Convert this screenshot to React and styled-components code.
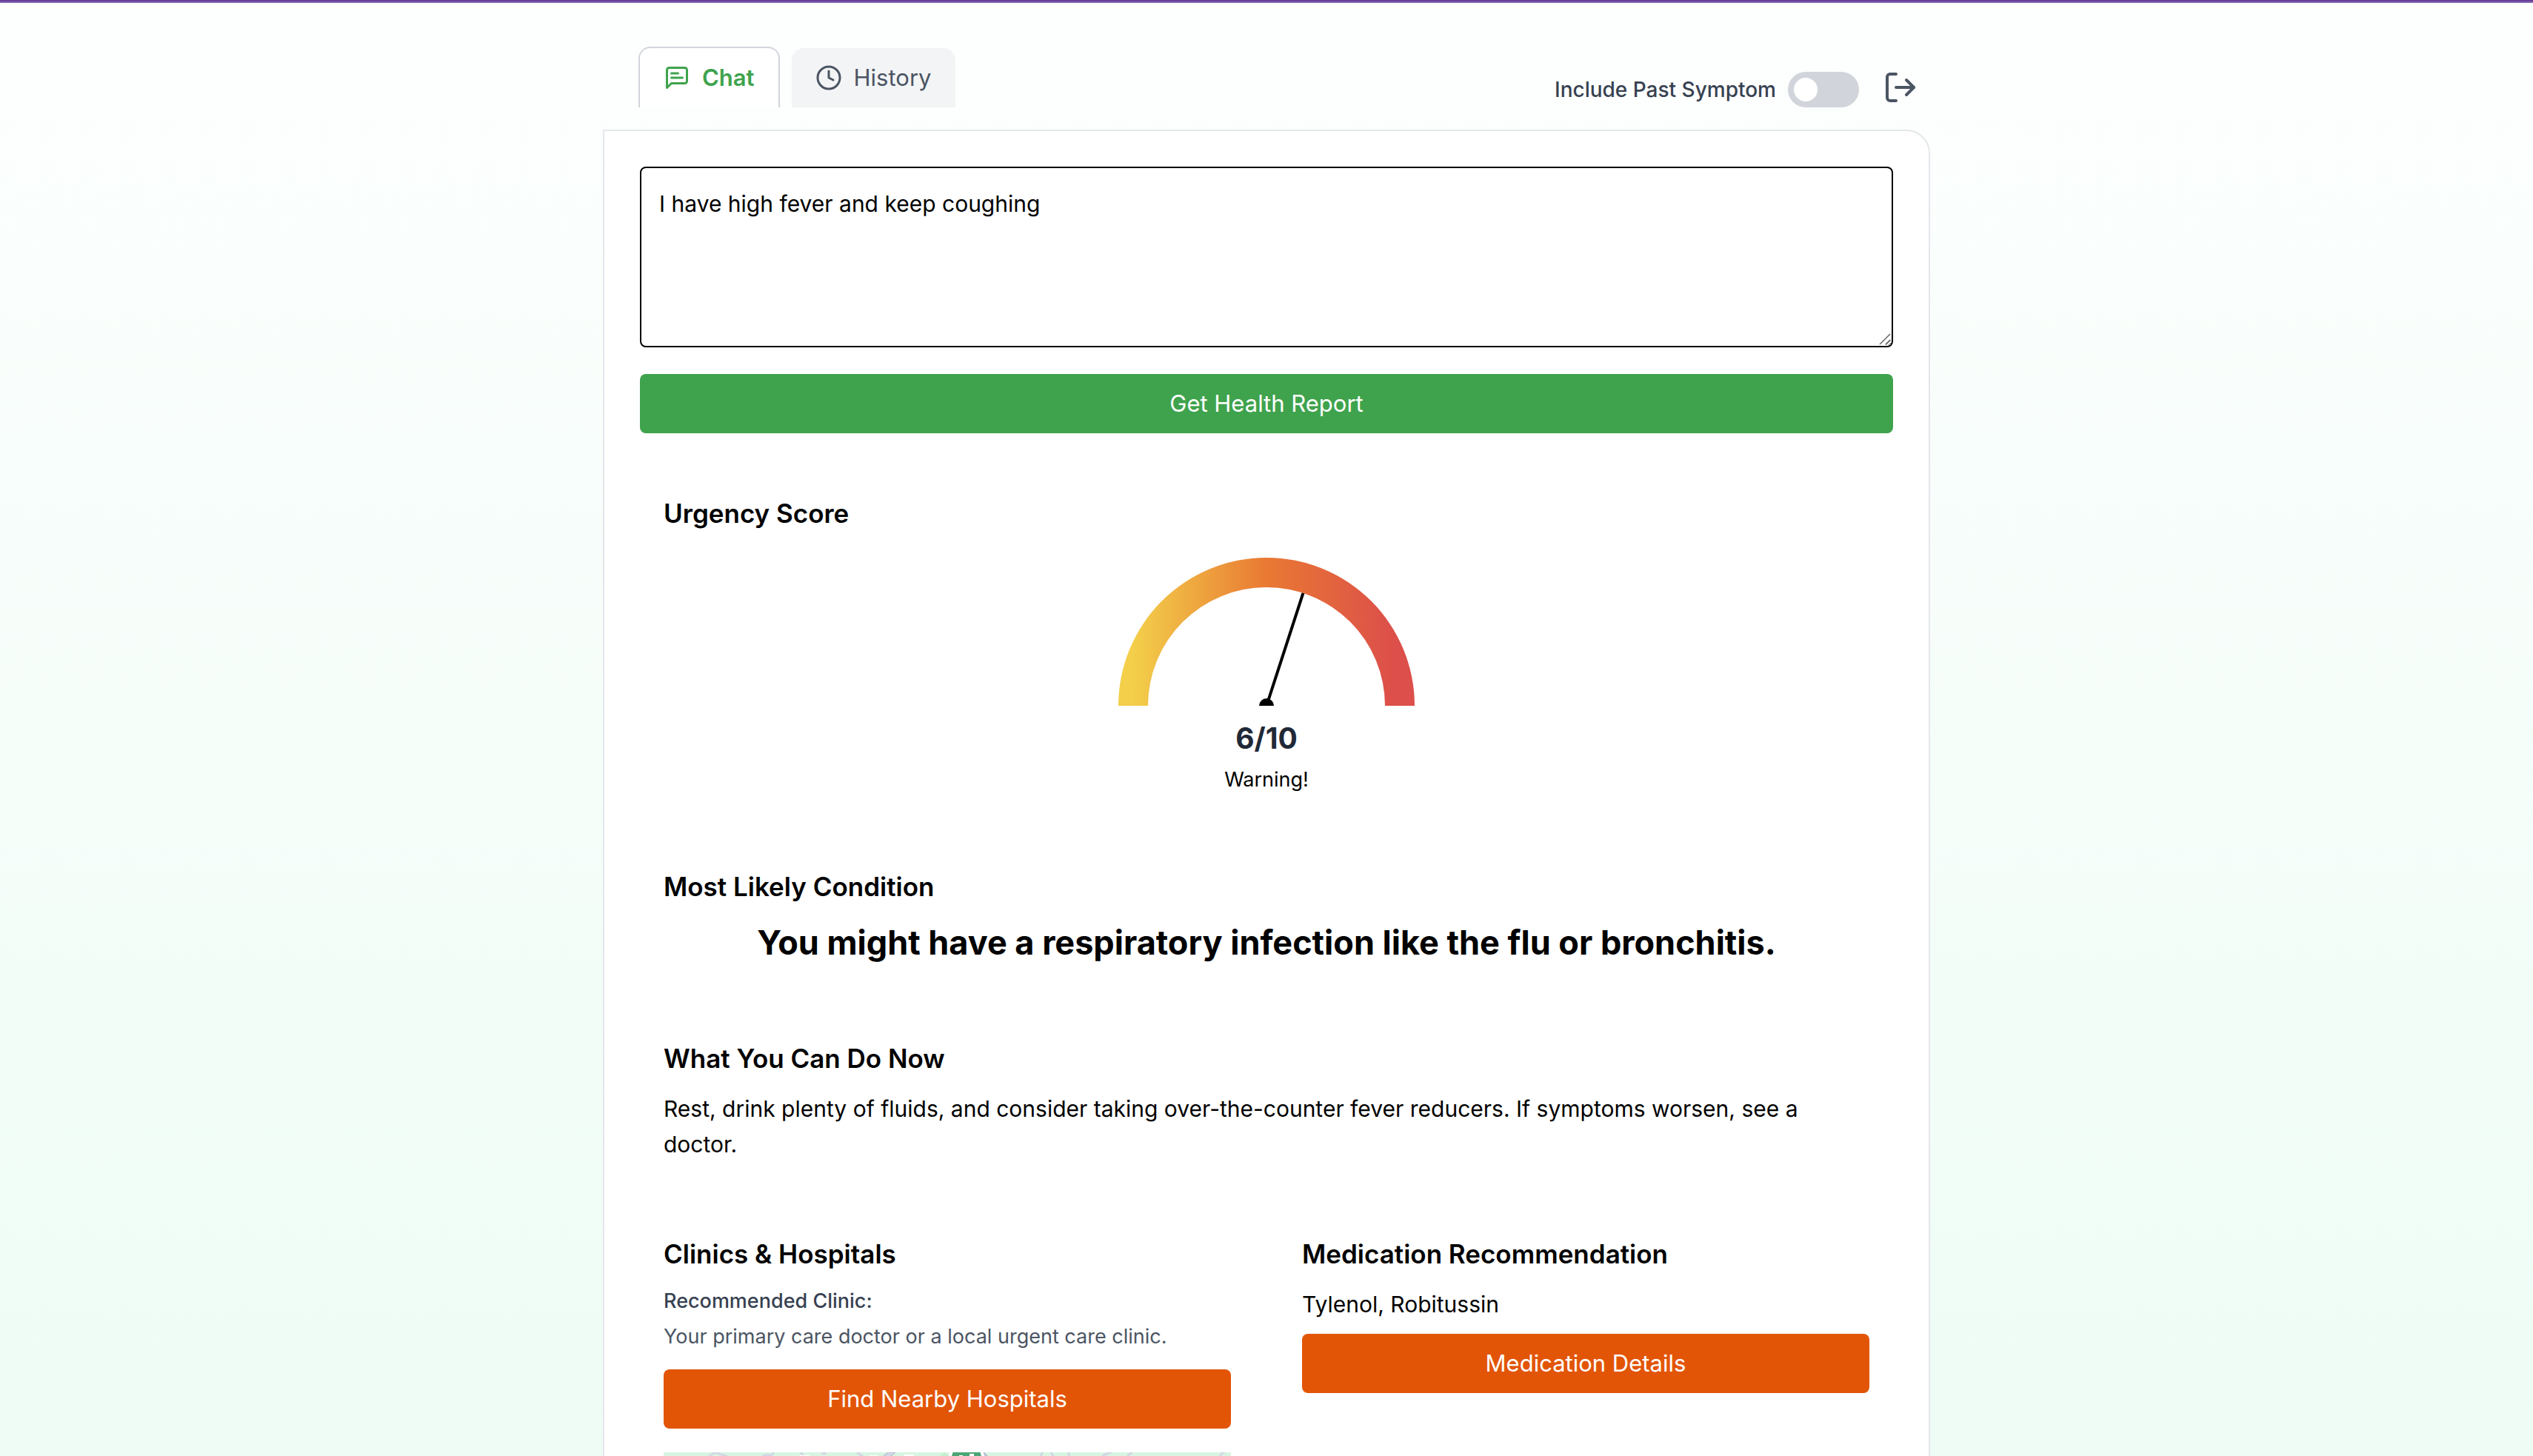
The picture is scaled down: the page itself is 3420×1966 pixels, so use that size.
import React, { useState } from "react";
import styled, { createGlobalStyle } from "styled-components";

const GlobalStyle = createGlobalStyle`
  *, *::before, *::after { box-sizing: border-box; }
  body { margin: 0; font-family: Inter, "Liberation Sans", sans-serif; color: #000; }
  h2, p { margin: 0; }
  button, textarea { font: inherit; }
`;

const Page = styled.div`
  height: 100vh;
  overflow-y: auto;
  scrollbar-width: none;
  background: linear-gradient(to bottom, #fdfffe, #eefcf5);
  font-size: 30px;
  line-height: 48px;
`;

const Accent = styled.div`
  height: 4px;
  border-bottom: 2px solid #8568b0;
  background: #653f99;
`;

const Shell = styled.main`
  max-width: 1792px;
  margin: 0 auto;
  padding-top: 59px;
`;

const Header = styled.header`
  display: flex;
  justify-content: space-between;
  align-items: flex-end;
  padding: 0 16px 0 48px;
  margin-bottom: 30px;
`;

const Tabs = styled.nav`
  display: flex;
  align-items: flex-end;
  gap: 16px;
`;

const Tab = styled.button`
  display: flex;
  align-items: center;
  gap: 16px;
  padding: 16px 32px;
  border: 2px solid #d1d5db;
  border-width: ${(p) => (p.$active ? "2px 2px 0" : "0")};
  border-radius: 16px 16px 0 0;
  background: ${(p) => (p.$active ? "#ffffff" : "#f3f4f6")};
  color: ${(p) => (p.$active ? "#3fa34d" : "#4b5563")};
  font-size: 31px;
  font-weight: ${(p) => (p.$active ? 600 : 400)};
  cursor: pointer;
`;

const Tools = styled.div`
  display: flex;
  align-items: flex-end;
  gap: 32px;
`;

const ToggleLabel = styled.label`
  display: flex;
  align-items: center;
  gap: 16px;
  color: #374151;
  font-size: 28px;
  font-weight: 500;
`;

const Toggle = styled.input`
  appearance: none;
  width: 96px;
  height: 48px;
  margin: 0;
  padding: 8px;
  border-radius: 24px;
  background: ${(p) => (p.checked ? "#3fa34d" : "#d1d5db")};
  cursor: pointer;

  &::before {
    content: "";
    display: block;
    width: 32px;
    height: 32px;
    margin-left: ${(p) => (p.checked ? "auto" : "0")};
    border-radius: 50%;
    background: #ffffff;
  }
`;

const IconButton = styled.button`
  display: flex;
  padding: 0;
  margin-bottom: 3px;
  border: 0;
  background: none;
  color: #4b5563;
  cursor: pointer;
`;

const Panel = styled.div`
  padding: 48px;
  border: 2px solid #e5e7eb;
  border-radius: 0 32px 32px 32px;
  background: #ffffff;
`;

const Form = styled.form`
  display: grid;
  gap: 36px;
  margin-bottom: 48px;
`;

const SymptomField = styled.div`
  position: relative;
  display: grid;
`;

const SymptomInput = styled.textarea`
  height: 244px;
  padding: 24px;
  border: 2px solid #000;
  border-radius: 8px;
  background: #ffffff;
  color: #000;
  resize: vertical;
  outline: none;
`;

const ResizeGrip = styled.svg`
  position: absolute;
  right: 2px;
  bottom: 2px;
  width: 20px;
  height: 20px;
  pointer-events: none;
`;

const ActionButton = styled.button`
  width: 100%;
  padding: 16px;
  border: 0;
  border-radius: 8px;
  background: ${(p) => (p.$tone === "orange" ? "#e25507" : "#3fa34d")};
  color: #ffffff;
  font-size: 31px;
  cursor: pointer;
`;

const Report = styled.div`
  display: grid;
  gap: 32px;
`;

const Columns = styled.div`
  display: grid;
  grid-template-columns: 1fr 1fr;
  gap: 32px;
`;

const Section = styled.section`
  padding: 32px;
`;

const Heading = styled.h2`
  margin-bottom: 16px;
  font-size: 35px;
  line-height: 56px;
  font-weight: 600;
`;

const Gauge = styled.div`
  display: flex;
  flex-direction: column;
  align-items: center;
  padding-top: 16px;
`;

const Score = styled.p`
  margin: 16px 0 8px;
  color: #1f2937;
  font-size: 39px;
  line-height: 56px;
  font-weight: 700;
`;

const Verdict = styled.p`
  font-size: 27px;
  line-height: 40px;
`;

const Condition = styled.p`
  font-size: 45px;
  line-height: 64px;
  font-weight: 700;
  text-align: center;
`;

const Clinic = styled.div`
  display: grid;
  gap: 8px;
  margin-bottom: 24px;
  font-size: 27px;
  line-height: 40px;
`;

const ClinicLabel = styled.p`
  color: #374151;
  font-weight: 500;
`;

const ClinicText = styled.p`
  color: #4b5563;
`;

const Medication = styled.p`
  margin-bottom: 16px;
`;

const MapFrame = styled.div`
  height: 512px;
  margin-top: 32px;
  overflow: hidden;
  background: #d8f5e1;
`;

const MapCanvas = styled.svg`
  display: block;
  width: 100%;
  height: 100%;
`;

function LineIcon({ size, children }) {
  return (
    <svg width={size} height={size} viewBox="0 0 24 24" fill="none" stroke="currentColor"
      strokeWidth="2" strokeLinecap="round" strokeLinejoin="round" aria-hidden="true">
      {children}
    </svg>
  );
}

function UrgencyDial({ score }) {
  const angle = Math.PI * (1 - score / 10);
  return (
    <svg width="400" height="200" viewBox="0 0 400 200" role="img" aria-label={`Urgency ${score} out of 10`}>
      <defs>
        <linearGradient id="urgency" x1="0" y1="0" x2="1" y2="0">
          <stop offset="0.05" stopColor="#f3cf4a" />
          <stop offset="0.5" stopColor="#e97933" />
          <stop offset="0.93" stopColor="#dc4f4a" />
        </linearGradient>
      </defs>
      <path d="M0 200a200 200 0 0 1 400 0h-40a160 160 0 0 0-320 0z" fill="url(#urgency)" />
      <line x1="200" y1="200" x2={200 + 160 * Math.cos(angle)} y2={200 - 160 * Math.sin(angle)} stroke="#000" strokeWidth="4" />
      <circle cx="200" cy="200" r="10" />
    </svg>
  );
}

function HospitalMap() {
  return (
    <MapFrame>
      <MapCanvas viewBox="0 0 766 512" preserveAspectRatio="xMidYMin slice" role="img" aria-label="Map of nearby hospitals">
        <g fill="none" stroke="#d2d7e5" strokeWidth="3">
          <path d="M20 34L62 5l7-5 15 5 60 24" />
          <path d="M134 5c4-3 8-2 12 0M149 0l-6 7" />
          <path d="M185-2q1 5 4 7l30 40" />
          <path d="M213-2q2 7 6 2" />
          <path d="M261 0l7 5 40 32" />
          <path d="M509 6l3-8M522-2l5 9 20 60" />
          <path d="M547 0v80" />
          <path d="M592 5l14-6M626 5l8-6" />
          <path d="M751 6q2-5 7-7" />
        </g>
        <path d="M240 52L303 0h10L250 52z" fill="#d2d7e5" stroke="#a9b1c6" strokeWidth="1" />
        <path d="M431 0l6 6 50 50" fill="none" stroke="#b9bfd2" strokeWidth="3" />
        <path d="M372 6l7-6 8 6v14h-15z" fill="#c3efcd" />
        <g fill="#ffffff">
          <rect x="183" y="4" width="15" height="5" rx="2" />
          <rect x="277" y="4" width="13" height="5" rx="2" />
          <rect x="324" y="3" width="14" height="6" rx="2" />
        </g>
        <circle cx="409" cy="8" r="24" fill="#ffffff" />
        <circle cx="409" cy="8" r="20" fill="#4ba675" />
        <path d="M399 4h5v6h9V2h6v17h-6v-5h-9v5h-5z" fill="#ffffff" />
      </MapCanvas>
    </MapFrame>
  );
}

export default function App() {
  const [symptoms, setSymptoms] = useState("I have high fever and keep coughing");
  const [includePast, setIncludePast] = useState(false);

  return (
    <Page>
      <GlobalStyle />
      <Accent />
      <Shell>
        <Header>
          <Tabs>
            <Tab type="button" $active>
              <LineIcon size={36}>
                <path d="M21 15a2 2 0 0 1-2 2H7l-4 4V5a2 2 0 0 1 2-2h14a2 2 0 0 1 2 2z" />
                <path d="M13 8H7" />
                <path d="M17 12H7" />
              </LineIcon>
              Chat
            </Tab>
            <Tab type="button">
              <LineIcon size={36}>
                <circle cx="12" cy="12" r="10" />
                <path d="M12 6v6l4 2" />
              </LineIcon>
              History
            </Tab>
          </Tabs>
          <Tools>
            <ToggleLabel>
              Include Past Symptom
              <Toggle type="checkbox" role="switch" checked={includePast}
                onChange={(e) => setIncludePast(e.target.checked)} />
            </ToggleLabel>
            <IconButton type="button" aria-label="Log out">
              <LineIcon size={48}>
                <path d="M9 21H5a2 2 0 0 1-2-2V5a2 2 0 0 1 2-2h4" />
                <path d="M16 17l5-5-5-5" />
                <path d="M21 12H9" />
              </LineIcon>
            </IconButton>
          </Tools>
        </Header>

        <Panel>
          <Form onSubmit={(e) => e.preventDefault()}>
            <SymptomField>
              <SymptomInput aria-label="Describe your symptoms" value={symptoms}
                onChange={(e) => setSymptoms(e.target.value)} />
              <ResizeGrip viewBox="0 0 20 20" stroke="#666666" strokeWidth="1.5" aria-hidden="true">
                <path d="M4 18L18 4M12 18l6-6" />
              </ResizeGrip>
            </SymptomField>
            <ActionButton type="submit">Get Health Report</ActionButton>
          </Form>

          <Report>
            <Section>
              <Heading>Urgency Score</Heading>
              <Gauge>
                <UrgencyDial score={6} />
                <Score>6/10</Score>
                <Verdict>Warning!</Verdict>
              </Gauge>
            </Section>

            <Section>
              <Heading>Most Likely Condition</Heading>
              <Condition>You might have a respiratory infection like the flu or bronchitis.</Condition>
            </Section>

            <Section>
              <Heading>What You Can Do Now</Heading>
              <p>
                Rest, drink plenty of fluids, and consider taking over-the-counter fever reducers.
                If symptoms worsen, see a doctor.
              </p>
            </Section>

            <Columns>
              <Section>
                <Heading>Clinics &amp; Hospitals</Heading>
                <Clinic>
                  <ClinicLabel>Recommended Clinic:</ClinicLabel>
                  <ClinicText>Your primary care doctor or a local urgent care clinic.</ClinicText>
                </Clinic>
                <ActionButton type="button" $tone="orange">Find Nearby Hospitals</ActionButton>
                <HospitalMap />
              </Section>
              <Section>
                <Heading>Medication Recommendation</Heading>
                <Medication>Tylenol, Robitussin</Medication>
                <ActionButton type="button" $tone="orange">Medication Details</ActionButton>
              </Section>
            </Columns>
          </Report>
        </Panel>
      </Shell>
    </Page>
  );
}
